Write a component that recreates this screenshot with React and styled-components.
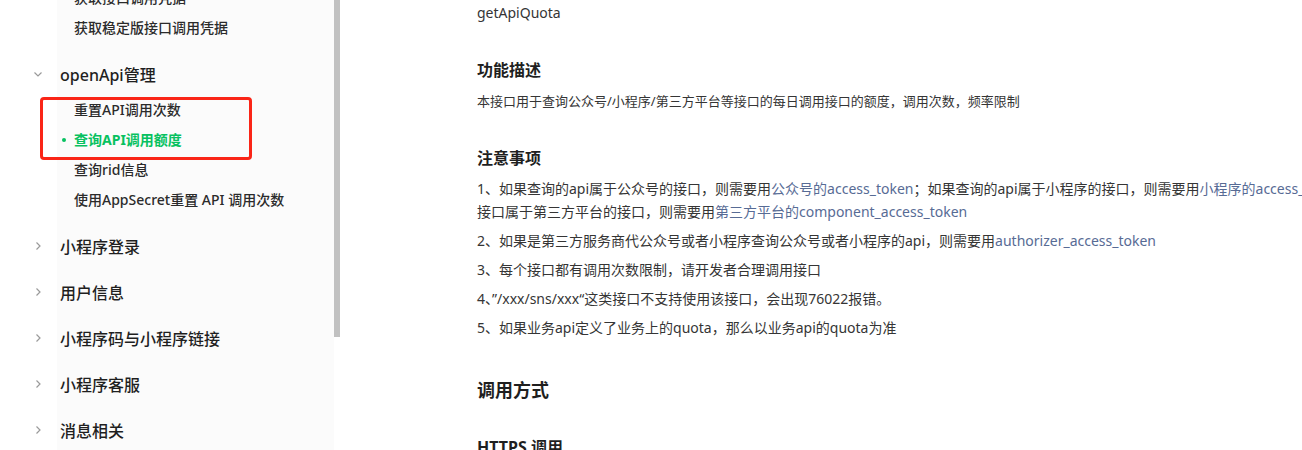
import React from 'react';
import styled, { createGlobalStyle } from 'styled-components';

const GlobalStyle = createGlobalStyle`
	html, body {
		margin: 0;
		padding: 0;
		background: #ffffff;
		overflow: hidden;
	}
	body {
		font-family: 'Noto Sans', 'Noto Sans CJK SC', sans-serif;
		color: #353535;
	}
`;

const StyledPage = styled.div`
	display: flex;
	width: 1302px;
	height: 450px;
	overflow: hidden;
`;

const StyledSidebar = styled.aside`
	position: relative;
	flex: 0 0 340px;
	height: 100%;
	overflow: hidden;
	background: linear-gradient(to right, #ffffff 57px, #fbfbfb 57px, #fbfbfb 334px, #ffffff 334px);
`;

const StyledScrollThumb = styled.div`
	position: absolute;
	top: 0;
	left: 334px;
	width: 6px;
	height: 337px;
	background-color: #c1c1c1;
`;

const StyledMarker = styled.div`
	position: absolute;
	left: 40px;
	top: 97px;
	width: 212px;
	height: 63px;
	box-sizing: border-box;
	border: 3px solid #fa2517;
	border-radius: 4px;
`;

const StyledNavList = styled.ul`
	list-style: none;
	margin: -18px 0 0;
	padding: 0;
`;

const StyledGroup = styled.li`
	margin-bottom: 6px;
`;

const StyledGroupHead = styled.div`
	display: flex;
	align-items: center;
	height: 40px;
	padding-left: 32px;
	font-size: 16px;
	font-weight: 500;
	color: #1f1f1f;
`;

const StyledChevron = styled.svg`
	width: 12px;
	height: 12px;
	margin-right: 16px;
	flex-shrink: 0;
`;

const StyledSubList = styled.ul`
	list-style: none;
	margin: 0;
	padding: 0 0 6px;
`;

const StyledSubItem = styled.li`
	position: relative;
	display: flex;
	align-items: center;
	height: 30px;
	padding-left: 74px;
	font-size: 14px;
	font-weight: ${({ active }) => (active ? 700 : 500)};
	color: ${({ active }) => (active ? '#07c160' : '#2b2b2b')};
	white-space: nowrap;
	&::before {
		content: '';
		display: ${({ active }) => (active ? 'block' : 'none')};
		position: absolute;
		left: 62px;
		top: 14px;
		width: 4px;
		height: 4px;
		border-radius: 50%;
		background-color: #07c160;
	}
`;

const StyledMain = styled.main`
	flex: 1;
	padding-left: 137px;
	overflow: hidden;
`;

const StyledDoc = styled.div`
	width: 1000px;
`;

const StyledApiName = styled.p`
	margin: 1px 0 0;
	font-size: 14px;
	line-height: 24px;
	color: #353535;
`;

const StyledHeading = styled.h2`
	margin: ${({ gap }) => gap}px 0 0;
	font-size: ${({ size }) => size}px;
	line-height: ${({ size }) => size + 8}px;
	font-weight: 700;
	color: #1f1f1f;
`;

const StyledDesc = styled.p`
	margin: 8px 0 0;
	font-size: 13px;
	line-height: 22px;
	color: #353535;
`;

const StyledNotes = styled.ul`
	list-style: none;
	margin: 7px 0 0;
	padding: 0;
`;

const StyledNote = styled.li`
	font-size: 14px;
	line-height: 23px;
	margin-bottom: 6px;
	color: #353535;
	white-space: nowrap;
`;

const StyledLink = styled.a`
	color: #576b95;
	text-decoration: none;
`;

const ChevronIcon = ({ open }) => (
	<StyledChevron viewBox='0 0 12 12'>
		<path
			d={open ? 'M2.5 4.5 L6 8 L9.5 4.5' : 'M4.5 2.5 L8 6 L4.5 9.5'}
			fill='none'
			stroke='#9a9a9a'
			strokeWidth='1.2'
		/>
	</StyledChevron>
);

const groups = [
	{ title: '小程序登录' },
	{ title: '用户信息' },
	{ title: '小程序码与小程序链接' },
	{ title: '小程序客服' },
	{ title: '消息相关' },
];

const App = () => {
	return (
		<>
			<GlobalStyle />
			<StyledPage>
				<StyledSidebar>
					<StyledNavList>
						<StyledGroup>
							<StyledSubList>
								<StyledSubItem>获取接口调用凭据</StyledSubItem>
								<StyledSubItem>获取稳定版接口调用凭据</StyledSubItem>
							</StyledSubList>
						</StyledGroup>
						<StyledGroup>
							<StyledGroupHead>
								<ChevronIcon open />
								openApi管理
							</StyledGroupHead>
							<StyledSubList>
								<StyledSubItem>重置API调用次数</StyledSubItem>
								<StyledSubItem active>查询API调用额度</StyledSubItem>
								<StyledSubItem>查询rid信息</StyledSubItem>
								<StyledSubItem>使用AppSecret重置 API 调用次数</StyledSubItem>
							</StyledSubList>
						</StyledGroup>
						{groups.map((g) => (
							<StyledGroup key={g.title}>
								<StyledGroupHead>
									<ChevronIcon />
									{g.title}
								</StyledGroupHead>
							</StyledGroup>
						))}
					</StyledNavList>
					<StyledMarker />
					<StyledScrollThumb />
				</StyledSidebar>
				<StyledMain>
					<StyledDoc>
						<StyledApiName>getApiQuota</StyledApiName>
						<StyledHeading size={16} gap={33}>
							功能描述
						</StyledHeading>
						<StyledDesc>
							本接口用于查询公众号/小程序/第三方平台等接口的每日调用接口的额度，调用次数，频率限制
						</StyledDesc>
						<StyledHeading size={16} gap={34}>
							注意事项
						</StyledHeading>
						<StyledNotes>
							<StyledNote>
								1、如果查询的api属于公众号的接口，则需要用
								<StyledLink>公众号的access_token</StyledLink>
								；如果查询的api属于小程序的接口，则需要用
								<StyledLink>小程序的access_token</StyledLink>；如果查询的
								<br />
								接口属于第三方平台的接口，则需要用
								<StyledLink>第三方平台的component_access_token</StyledLink>
							</StyledNote>
							<StyledNote>
								2、如果是第三方服务商代公众号或者小程序查询公众号或者小程序的api，则需要用
								<StyledLink>authorizer_access_token</StyledLink>
							</StyledNote>
							<StyledNote>3、每个接口都有调用次数限制，请开发者合理调用接口</StyledNote>
							<StyledNote>4、”/xxx/sns/xxx“这类接口不支持使用该接口，会出现76022报错。</StyledNote>
							<StyledNote>5、如果业务api定义了业务上的quota，那么以业务api的quota为准</StyledNote>
						</StyledNotes>
						<StyledHeading size={18} gap={38}>
							调用方式
						</StyledHeading>
						<StyledHeading size={16} gap={32}>
							HTTPS 调用
						</StyledHeading>
					</StyledDoc>
				</StyledMain>
			</StyledPage>
		</>
	);
};

export default App;
